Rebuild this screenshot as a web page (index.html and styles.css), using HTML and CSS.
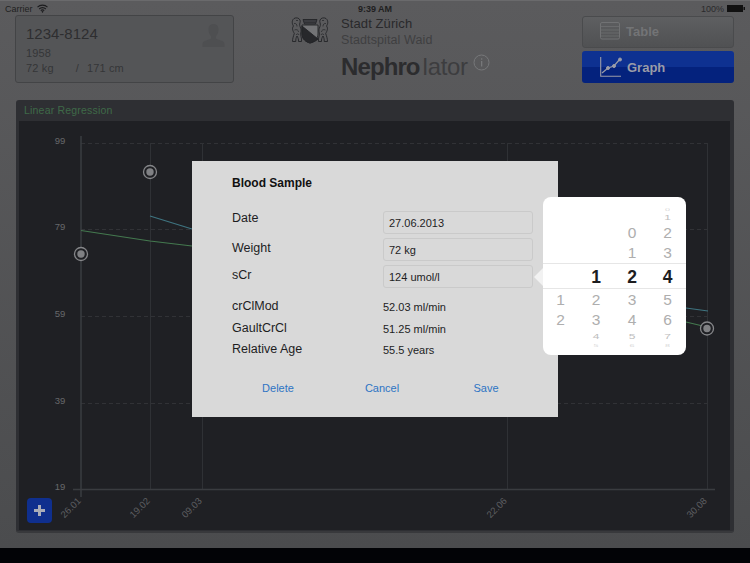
FILE: index.html
```html
<!DOCTYPE html>
<html lang="en">
<head>
<meta charset="utf-8">
<title>Nephrolator</title>
<link rel="stylesheet" href="styles.css">
</head>
<body>
<div class="app">
  <div class="status">
    <div class="status-left">Carrier
      <svg class="wifi" width="11" height="9" viewBox="0 0 11 9"><path d="M.5 3.2a7 7 0 0 1 10 0M2.2 5a4.6 4.6 0 0 1 6.6 0M3.8 6.6a2.3 2.3 0 0 1 3.4 0" fill="none" stroke="#1c1c1e" stroke-width="1.1"/><path d="M5.5 9 4.4 7.6a1.6 1.6 0 0 1 2.2 0z" fill="#1c1c1e"/></svg>
    </div>
    <div class="status-mid">9:39 AM</div>
    <div class="status-right">100%
      <svg width="18" height="7" viewBox="0 0 18 7"><rect x="0" y="0" width="16" height="7" fill="#111"/><rect x="16.5" y="2" width="1.5" height="3" fill="#111"/></svg>
    </div>
  </div>

  <header class="header">
    <section class="patient">
      <div class="patient-text">
        <div class="pid">1234-8124</div>
        <div class="pline">1958</div>
        <div class="pline pmeasure"><span>72 kg</span><span class="pslash">/</span><span>171 cm</span></div>
      </div>
      <svg class="person" width="23" height="23" viewBox="0 0 23 23"><path d="M11.5 0c3.4 0 5 2.400 5 5.500 0 3-1.200 5.300-2.500 6.700v2.300c1.500 1.300 8.500 2 8.500 5.500v3H.5v-3c0-3.500 7-4.200 8.500-5.500v-2.300C7.700 10.800 6.500 8.500 6.500 5.500c0-3.100 1.600-5.500 5-5.500z" fill="#4e4f51"/></svg>
    </section>

    <section class="brand">
      <svg class="crest" width="38" height="27" viewBox="0 0 38 27" fill="none" stroke="#232427" stroke-width=".9">
        <path d="M12 2.500h14l-1.500 4.500h-11z" fill="#47484c"/>
        <path d="M13 4h12M13.500 5.500h11" stroke-width=".6"/>
        <path d="M11 8h16v9c0 5-4 8-8 9-4-1-8-4-8-9z" fill="#737476"/>
        <path d="M11 9 27 22c-2 2-5 3.500-8 4-4-1-8-4-8-9z" fill="#27282b"/>
        <path d="M3 1.500C5 .3 8 .8 9 3c.8 2-.8 3.500-.3 5.500.5 2 1.800 3.500 1.300 6-.4 2-.6 3.500 0 5 .5 1.500.8 3.300.5 5H7.500c.2-2-.5-4-1.500-5.500-1 1.500-1.300 3.500-1.200 5.500H1.500c0-3 1-5.500 1.800-8C2 14 .5 11.500 2.500 9 1 7 .5 3.500 3 1.500z"/>
        <path d="M3 6.500c2-.5 3 1 3 3M3.500 13c2-1 4 0 4 2M5 18c1-1.500 2.500-1.500 3 0M5 3.500h2" stroke-width=".7"/>
        <path d="M35 1.500C33 .3 30 .8 29 3c-.8 2 .8 3.500.3 5.500-.5 2-1.800 3.500-1.300 6 .4 2 .6 3.500 0 5-.5 1.500-.8 3.300-.5 5h3c-.2-2 .5-4 1.500-5.500 1 1.500 1.300 3.500 1.200 5.500h3.300c0-3-1-5.500-1.800-8 1.300-2.500 2.800-5 .8-7.500 1.500-2 2-5.500-.5-7.500z"/>
        <path d="M35 6.500c-2-.5-3 1-3 3M34.500 13c-2-1-4 0-4 2M33 18c-1-1.500-2.500-1.500-3 0M33 3.500h-2" stroke-width=".7"/>
      </svg>
      <div class="brand-text">
        <div class="city">Stadt Zürich</div>
        <div class="hospital">Stadtspital Waid</div>
        <div class="product"><b>Nephro</b><span class="lator">lator</span>
          <svg class="info" width="17" height="17" viewBox="0 0 17 17"><circle cx="8.500" cy="8.500" r="7.500" fill="none" stroke="#77787a"/><rect x="8" y="7" width="1.300" height="5.500" fill="#77787a"/><rect x="8" y="4.300" width="1.300" height="1.400" fill="#77787a"/></svg>
        </div>
      </div>
    </section>

    <nav class="views">
      <div class="view view-off">
        <svg width="20" height="18" viewBox="0 0 20 18" fill="none" stroke="#717274"><rect x=".5" y=".5" width="19" height="16.500" rx="1.500"/><path d="M.5 4.500h19M.5 8h19M.5 11h19M.5 14h19" stroke-width=".7"/></svg>
        <span>Table</span>
      </div>
      <div class="view view-on">
        <svg width="22" height="20" viewBox="0 0 22 20" fill="none" stroke="#9a9ca8"><path d="M.7 0v19.300H21" stroke-width="1.100"/><path d="M2 16 8 11l6-2 6-7" stroke-width="1.300"/><circle cx="8" cy="11" r="1.500" fill="#9a9ca8"/><circle cx="14" cy="9" r="1.500" fill="#9a9ca8"/><circle cx="20" cy="2.500" r="1.500" fill="#9a9ca8"/></svg>
        <span>Graph</span>
      </div>
    </nav>
  </header>

  <section class="panel">
    <h2 class="panel-title">Linear Regression</h2>
    <svg class="chart" width="711" height="409" viewBox="19 120 711 409">
      <g class="grid-dash">
        <path d="M81 142.500H707M81 228.500H707M81 315.500H707M81 402.500H707"/>
      </g>
      <g class="grid-v">
        <path d="M150.500 142V488M202.500 142V488M507.500 142V488M707.500 142V488"/>
      </g>
      <path class="axis" d="M81 135V496M73 488.500H715"/>
      <path class="line-teal" d="M150 215 192 228M686 307 708 310"/>
      <path class="line-green" d="M81 229.500 150 240 192 245M686 321 707 326"/>
      <g class="dot"><circle class="ring" cx="81" cy="253" r="6.500"/><circle class="core" cx="81" cy="253" r="3.700"/></g>
      <g class="dot"><circle class="ring" cx="150" cy="171" r="6.500"/><circle class="core" cx="150" cy="171" r="3.700"/></g>
      <g class="dot"><circle class="ring" cx="707" cy="327.500" r="6.500"/><circle class="core" cx="707" cy="327.500" r="3.700"/></g>
      <g class="ylabels">
        <text x="60" y="142.500">99</text>
        <text x="60" y="229">79</text>
        <text x="60" y="316">59</text>
        <text x="60" y="403">39</text>
        <text x="60" y="489">19</text>
      </g>
      <g class="xlabels">
        <text transform="translate(73 509) rotate(-45)">26.01</text>
        <text transform="translate(142 509) rotate(-45)">19.02</text>
        <text transform="translate(194 509) rotate(-45)">09.03</text>
        <text transform="translate(499 509) rotate(-45)">22.06</text>
        <text transform="translate(699 509) rotate(-45)">30.08</text>
      </g>
    </svg>
    <button class="add" type="button">
      <svg width="11" height="11" viewBox="0 0 11 11"><path d="M4 0h3v4h4v3H7v4H4V7H0V4h4z" fill="#a9acb8"/></svg>
    </button>
  </section>
</div>

<div class="modal">
  <h3 class="modal-title">Blood Sample</h3>
  <div class="form">
    <label class="flabel flabel-first">Date</label><div class="field">27.06.2013</div>
    <label class="flabel">Weight</label><div class="field">72 kg</div>
    <label class="flabel">sCr</label><div class="field">124 umol/l</div>
  </div>
  <div class="results">
    <div class="rlabel">crClMod</div><div class="rvalue">52.03 ml/min</div>
    <div class="rlabel">GaultCrCl</div><div class="rvalue">51.25 ml/min</div>
    <div class="rlabel">Relative Age</div><div class="rvalue">55.5 years</div>
  </div>
  <div class="actions">
    <a class="action">Delete</a>
    <a class="action">Cancel</a>
    <a class="action">Save</a>
  </div>
</div>

<div class="picker">
  <div class="picker-arrow"></div>
  <div class="picker-band"></div>
  <div class="wheel">
    <span></span><span></span><span></span><span class="d d-far">0</span>
    <span></span><span></span><span></span><span class="d d-edge">1</span>
    <span></span><span></span><span class="d">0</span><span class="d">2</span>
    <span></span><span></span><span class="d">1</span><span class="d">3</span>
    <span></span><span class="d d-sel">1</span><span class="d d-sel">2</span><span class="d d-sel">4</span>
    <span class="d">1</span><span class="d">2</span><span class="d">3</span><span class="d">5</span>
    <span class="d">2</span><span class="d">3</span><span class="d">4</span><span class="d">6</span>
    <span></span><span class="d d-edge">4</span><span class="d d-edge">5</span><span class="d d-edge">7</span>
    <span></span><span class="d d-far">5</span><span class="d d-far">6</span><span class="d d-far">8</span>
  </div>
</div>
</body>
</html>
```
FILE: styles.css
```css
* { box-sizing: border-box; }
html, body { margin: 0; padding: 0; }
body {
  width: 750px;
  height: 563px;
  overflow: hidden;
  background: #020306;
  font-family: "Liberation Sans", Arial, sans-serif;
  position: relative;
}
.app {
  height: 548px;
  background: linear-gradient(#5b5b5d, #4b4c4e);
  padding-top: 1px;
  border-top: 1px solid #6a6a6c;
  display: flex;
  flex-direction: column;
}

/* status bar */
.status {
  height: 13px;
  display: grid;
  grid-template-columns: 1fr auto 1fr;
  align-items: center;
  padding: 0 5px;
  font-size: 9px;
  color: #1f1f21;
}
.status-left { display: flex; align-items: center; gap: 4px; }
.status-mid { font-weight: bold; }
.status-right { display: flex; justify-content: flex-end; align-items: center; gap: 3px; color: #2a2a2c; }

/* header */
.header {
  height: 68px;
  display: flex;
  align-items: stretch;
  padding: 0 16px 0 15px;
}
.patient {
  width: 219px;
  background: #545557;
  border: 1px solid #434446;
  border-radius: 3px;
  padding: 10px 8px 0 10px;
  display: flex;
  justify-content: space-between;
  align-items: flex-start;
}
.pid { font-size: 15px; color: #2e2e30; line-height: 17px; margin-top: -1px; }
.pline { font-size: 11px; color: #353537; line-height: 15px; letter-spacing: .15px; }
.patient-text .pline:nth-child(2) { margin-top: 4px; }
.pmeasure { display: flex; }
.pslash { margin: 0 8px 0 22px; }
.person { margin-top: -2px; }

.brand {
  margin-left: 57px;
  display: flex;
  gap: 12px;
  padding-top: 2px;
}
.crest { flex: none; }
.brand-text { margin-top: -1px; }
.city { font-size: 13px; line-height: 16px; color: #29292b; letter-spacing: .1px; }
.hospital { font-size: 12.500px; line-height: 17px; color: #3f3f41; letter-spacing: .1px; }
.product { font-size: 24px; line-height: 30px; margin-top: 3px; color: #3d3d3f; display: flex; align-items: flex-start; white-space: nowrap; }
.product b { color: #2c2c2e; letter-spacing: -.9px; font-size: 24px; }
.lator { margin-left: 3px; letter-spacing: -.3px; }
.info { margin: 2px 0 0 5px; }

.views {
  width: 152px;
  margin-left: auto;
  padding-top: 1px;
  display: flex;
  flex-direction: column;
  gap: 3px;
}
.view {
  height: 32px;
  border-radius: 3px;
  display: flex;
  align-items: center;
  gap: 6px;
  padding-left: 17px;
  font-size: 13px;
  font-weight: bold;
}
.view-off {
  background: linear-gradient(#5e5f61, #505153);
  border: 1px solid #4a4b4d;
  color: #737476;
  padding-bottom: 2px;
}
.view-on {
  background: linear-gradient(#0e3191 0, #0e3191 50%, #04227d 50%, #04227d 100%);
  color: #9a9ca8;
  gap: 5px;
  padding-left: 18px;
}

/* chart panel */
.panel {
  position: relative;
  margin: 17px 16px 0;
  height: 433px;
  background: #2e2f33;
  border-radius: 3px;
  border-bottom: 2px solid #38393c;
  padding: 0 3px;
  display: flex;
  flex-direction: column;
}
.panel-title {
  margin: 0;
  height: 21px;
  line-height: 21px;
  padding-left: 5px;
  font-size: 10.500px;
  font-weight: normal;
  color: #3f6a48;
  letter-spacing: .2px;
}
.chart { display: block; background: #1f2024; }
.grid-dash path { fill: none; stroke: #313236; stroke-dasharray: 4 3; }
.grid-v path { fill: none; stroke: #2f3135; }
.axis { fill: none; stroke: #3a3c40; stroke-width: 1.500; }
.line-teal { fill: none; stroke: #3f7480; stroke-width: 1.200; }
.line-green { fill: none; stroke: #44794f; stroke-width: 1.200; }
.ring { fill: #1f2024; stroke: #86878a; stroke-width: 1.300; }
.core { fill: #808184; }
.ylabels text { font-size: 9.500px; fill: #67686b; text-anchor: middle; }
.xlabels text { font-size: 9.500px; fill: #5e5f62; text-anchor: middle; }
.add {
  position: absolute;
  left: 11px;
  top: 398px;
  width: 25px;
  height: 25px;
  border: 0;
  padding: 0;
  border-radius: 4px;
  background: #0f2f8e;
  display: flex;
  align-items: center;
  justify-content: center;
}

/* modal */
.modal {
  position: absolute;
  left: 192px;
  top: 161px;
  width: 366px;
  height: 256px;
  background: #d9d9d9;
  padding: 15px 25px 0 40px;
  color: #1d1d1f;
  font-size: 12.500px;
}
.modal-title { margin: 0; font-size: 12px; line-height: 15px; font-weight: bold; color: #111; }
.form {
  display: grid;
  grid-template-columns: 151px 150px;
  grid-auto-rows: 23px;
  row-gap: 4px;
  margin-top: 20px;
}
.flabel { line-height: 15px; padding-top: 3px; }
.flabel-first { padding-top: 0; }
.field {
  border: 1px solid #cacaca;
  border-radius: 3px;
  background: #d9d9d9;
  padding-left: 5px;
  line-height: 22px;
  font-size: 11px;
}
.results {
  display: grid;
  grid-template-columns: 151px 150px;
  grid-auto-rows: 21.500px;
  margin-top: 10px;
}
.rlabel { line-height: 17px; }
.rvalue { font-size: 11px; line-height: 19px; }
.actions {
  display: grid;
  grid-template-columns: repeat(3, 104px);
  margin: 18px 0 0 -6px;
}
.action { text-align: center; color: #2d74c4; font-size: 11px; line-height: 15px; }

/* picker popover */
.picker {
  position: absolute;
  left: 543px;
  top: 197px;
  width: 143px;
  height: 158px;
  background: #fff;
  border-radius: 8px;
}
.picker-arrow {
  position: absolute;
  left: -9px;
  top: 71px;
  width: 0;
  height: 0;
  border-top: 9px solid transparent;
  border-bottom: 9px solid transparent;
  border-right: 9px solid #f2f2f2;
}
.picker-band {
  position: absolute;
  left: 0;
  right: 0;
  top: 66px;
  height: 26px;
  border-top: 1px solid #e6e6e6;
  border-bottom: 1px solid #e6e6e6;
}
.wheel {
  position: relative;
  display: grid;
  grid-template-columns: 35px 36px 36px 35px;
  grid-template-rows: 4px 11px 20px 20px 27px 20px 20px 14px 4px;
  padding: 11px 0 0 0;
  justify-items: center;
  align-items: center;
}
.d { font-size: 15.500px; color: #aeaeae; line-height: 1; }
.d-sel { font-size: 17.500px; font-weight: bold; color: #1d1d1f; padding-top: 2px; }
.d-edge { font-size: 12px; transform: scaleY(.6); color: #bdbdbd; }
.d-far { font-size: 9px; transform: scaleY(.35); color: #d8d8d8; }
```
